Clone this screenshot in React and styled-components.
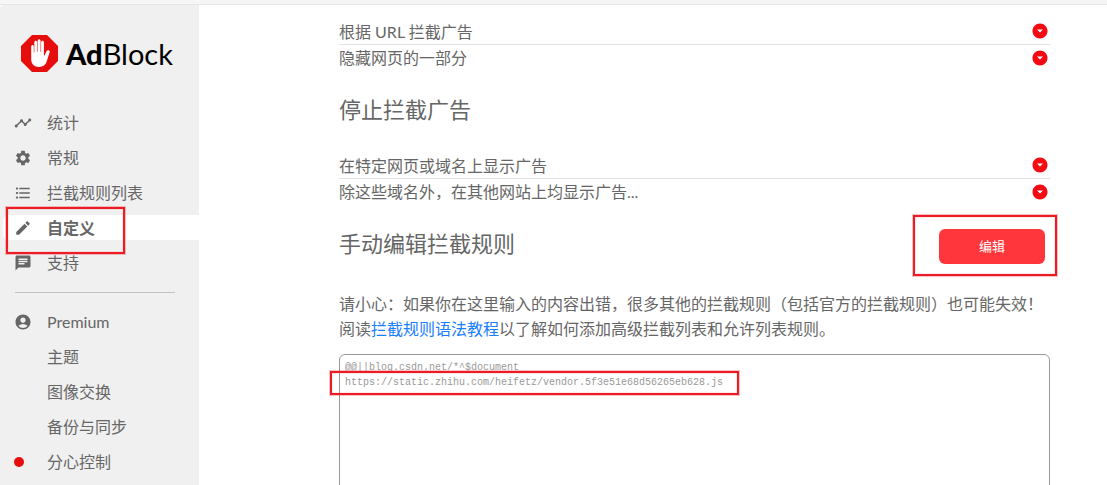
import React from "react";
import styled, { createGlobalStyle, css } from "styled-components";
import {
  MdTimeline,
  MdSettings,
  MdFormatListBulleted,
  MdEdit,
  MdChat,
  MdAccountCircle,
  MdArrowDropDownCircle,
} from "react-icons/md";

const GlobalStyle = createGlobalStyle`
  * { box-sizing: border-box; }
  body {
    margin: 0;
    background: #fff;
    color: #666;
    font-family: Lato, "Noto Sans CJK SC", sans-serif;
    font-size: 16px;
    line-height: 25px;
  }
`;

const Shell = styled.div`
  display: flex;
  flex-direction: column;
  height: 100vh;
  overflow: hidden;
`;

const TopEdge = styled.div`
  flex: none;
  height: 5px;
  background: #f6f6f6;
  border-bottom: 1px solid #e6e6e6;
`;

const Body = styled.div`
  flex: 1;
  display: flex;
  min-height: 0;
`;

const Sidebar = styled.aside`
  flex: none;
  width: 199px;
  background: #f0f0f0;
  padding-top: 30px;
  border-top-left-radius: 4px;
`;

const Brand = styled.a`
  display: flex;
  align-items: center;
  gap: 8px;
  height: 37px;
  margin: 0 0 38px 21px;
  color: #000;
  font-size: 29px;
  line-height: 37px;
  text-decoration: none;
  b {
    font-weight: 900;
  }
`;

const NavList = styled.ul`
  display: flex;
  flex-direction: column;
  gap: 10px;
  list-style: none;
  margin: 0;
  padding: 0 0 0 3px;
`;

const NavItem = styled.li`
  position: relative;
`;

const NavLink = styled.a`
  display: flex;
  align-items: center;
  height: 25px;
  padding-left: 11px;
  border-radius: 6px 0 0 6px;
  color: #666;
  text-decoration: none;
  ${(p) =>
    p.$active &&
    css`
      background: #fff;
      font-weight: 700;
    `}
`;

const IconSlot = styled.span`
  display: flex;
  flex: none;
  width: 33px;
  font-size: 18px;
`;

const Dot = styled.span`
  width: 10px;
  height: 10px;
  border-radius: 50%;
  background: #e60d0d;
`;

const Divider = styled.hr`
  height: 1px;
  margin: 17px 24px 16px 15px;
  border: 0;
  background: #c3c3c3;
`;

const Main = styled.main`
  flex: 1;
  min-width: 0;
  overflow: hidden;
  padding: 13px 57px 0 140px;
`;

const Options = styled.div`
  display: flex;
  flex-direction: column;
`;

const OptionRow = styled.button`
  display: flex;
  align-items: center;
  justify-content: space-between;
  width: 100%;
  height: 26px;
  padding: 0 1px 0 0;
  border: 0;
  background: none;
  color: #666;
  font: inherit;
  text-align: left;
  cursor: pointer;
  & + & {
    border-top: 1px solid #e3e3e3;
  }
  svg {
    flex: none;
    color: #f50a14;
    font-size: 18px;
  }
`;

const Heading = styled.h2`
  margin: 0;
  font-size: 22px;
  font-weight: 400;
  line-height: 30px;
`;

const Section = styled.section`
  margin-top: 25px;
  ${Options} {
    margin-top: 27px;
  }
`;

const HeadingRow = styled.div`
  display: flex;
  align-items: flex-start;
  justify-content: space-between;
  height: 35px;
  padding-right: 5px;
`;

const ButtonWrap = styled.div`
  position: relative;
`;

const EditButton = styled.button`
  display: block;
  width: 106px;
  height: 35px;
  border: 0;
  border-radius: 6px;
  background: #ff363c;
  color: #fff;
  font: inherit;
  font-size: 13px;
  cursor: pointer;
`;

const Notice = styled.p`
  margin: 27px 0 13px;
  a {
    color: #1a80ff;
    text-decoration: none;
  }
`;

const Editor = styled.div`
  position: relative;
`;

const FilterText = styled.textarea`
  display: block;
  width: 100%;
  height: 320px;
  padding: 5px;
  border: 1px solid #999;
  border-radius: 6px;
  outline: 0;
  resize: none;
  background: #fff;
  color: #999;
  font: 10px / 15px "Liberation Mono", monospace;
`;

const Marker = styled.span`
  position: absolute;
  border: 2px solid #ed1c24;
  box-shadow: 0 0 0 1px #ed1c2444, inset 0 0 0 1px #ed1c2418;
  pointer-events: none;
`;

const NavMarker = styled(Marker)`
  top: -8px;
  left: 3px;
  width: 119px;
  height: 47px;
  z-index: 1;
`;

const ButtonMarker = styled(Marker)`
  inset: -14px -12px -12px -26px;
`;

const LineMarker = styled(Marker)`
  top: 17px;
  left: -9px;
  width: 409px;
  height: 24px;
`;

function Logo() {
  return (
    <svg width="37" height="37" viewBox="0 0 37 37" aria-hidden="true">
      <path d="M11 0h15l11 11v15L26 37H11L0 26V11z" fill="#e60d0d" />
      <path
        d="M10.2 11.6c0-2.2 2.6-2.2 2.6 0v6h.5V7.4c0-2.2 2.8-2.2 2.8 0v9.7h.5V5.9c0-2.2 3-2.2 3 0v11.200h.5V7.4c0-2.2 2.8-2.2 2.8 0v13.200h.6l2-4.400c.9-1.700 3.600-1.200 3.200.700l-2.900 9.300c-1.200 3.900-3.700 5.700-7.600 5.700-5 0-8-2.800-8-7.700z"
        fill="#fff"
      />
    </svg>
  );
}

const mainNav = [
  { label: "统计", icon: <MdTimeline /> },
  { label: "常规", icon: <MdSettings /> },
  { label: "拦截规则列表", icon: <MdFormatListBulleted /> },
  { label: "自定义", icon: <MdEdit />, active: true },
  { label: "支持", icon: <MdChat /> },
];

const premiumNav = [
  { label: "Premium", icon: <MdAccountCircle /> },
  { label: "主题" },
  { label: "图像交换" },
  { label: "备份与同步" },
  { label: "分心控制", icon: <Dot /> },
];

function Nav({ items }) {
  return (
    <NavList>
      {items.map((item) => (
        <NavItem key={item.label}>
          <NavLink
            href="#"
            $active={item.active}
            aria-current={item.active ? "page" : undefined}
          >
            <IconSlot>{item.icon}</IconSlot>
            {item.label}
          </NavLink>
          {item.active && <NavMarker />}
        </NavItem>
      ))}
    </NavList>
  );
}

function OptionList({ labels }) {
  return (
    <Options>
      {labels.map((label) => (
        <OptionRow key={label} type="button">
          {label}
          <MdArrowDropDownCircle />
        </OptionRow>
      ))}
    </Options>
  );
}

const filters =
  "@@||blog.csdn.net/*^$document\nhttps://static.zhihu.com/heifetz/vendor.5f3e51e68d56265eb628.js";

export default function App() {
  return (
    <Shell>
      <GlobalStyle />
      <TopEdge />
      <Body>
        <Sidebar>
          <Brand href="#">
            <Logo />
            <span>
              <b>Ad</b>Block
            </span>
          </Brand>
          <nav>
            <Nav items={mainNav} />
            <Divider />
            <Nav items={premiumNav} />
          </nav>
        </Sidebar>
        <Main>
          <OptionList labels={["根据 URL 拦截广告", "隐藏网页的一部分"]} />
          <Section>
            <Heading>停止拦截广告</Heading>
            <OptionList
              labels={[
                "在特定网页或域名上显示广告",
                "除这些域名外，在其他网站上均显示广告...",
              ]}
            />
          </Section>
          <Section>
            <HeadingRow>
              <Heading id="manual">手动编辑拦截规则</Heading>
              <ButtonWrap>
                <EditButton type="button">编辑</EditButton>
                <ButtonMarker />
              </ButtonWrap>
            </HeadingRow>
            <Notice>
              请小心：如果你在这里输入的内容出错，很多其他的拦截规则（包括官方的拦截规则）也可能失效！
              <br />
              阅读<a href="#">拦截规则语法教程</a>
              以了解如何添加高级拦截列表和允许列表规则。
            </Notice>
            <Editor>
              <FilterText
                aria-labelledby="manual"
                defaultValue={filters}
                readOnly
                spellCheck={false}
              />
              <LineMarker />
            </Editor>
          </Section>
        </Main>
      </Body>
    </Shell>
  );
}
